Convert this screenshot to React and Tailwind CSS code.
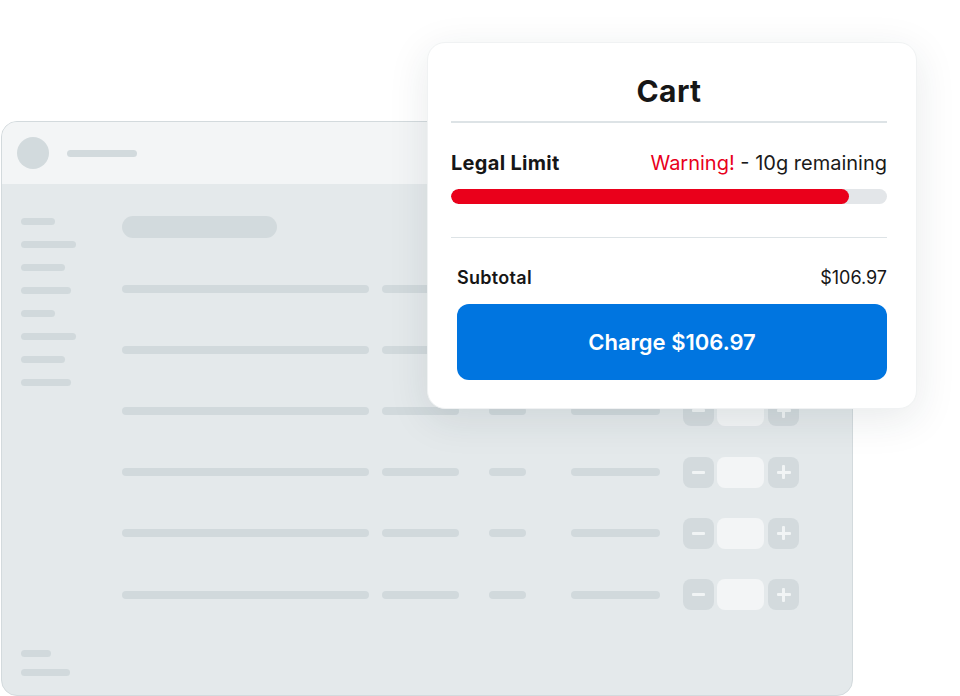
const rows = [0, 1, 2, 3, 4, 5];
const sideBars = ['w-[34px]', 'w-[55px]', 'w-[44px]', 'w-[50px]', 'w-[34px]', 'w-[55px]', 'w-[44px]', 'w-[50px]'];

function Stepper() {
  return (
    <div className="flex items-center gap-[3px]">
      <div className="w-[31px] h-[31px] rounded-[8px] bg-[#d3dadd] flex items-center justify-center">
        <div className="w-[13px] h-[3px] bg-[#f1f4f5] rounded-[1px]" />
      </div>
      <div className="w-[47px] h-[31px] rounded-[8px] bg-[#f3f5f6]" />
      <div className="ml-[1px] w-[31px] h-[31px] rounded-[8px] bg-[#d3dadd] flex items-center justify-center relative">
        <div className="w-[14px] h-[3px] bg-[#f1f4f5] rounded-[1px]" />
        <div className="absolute w-[3px] h-[14px] bg-[#f1f4f5] rounded-[1px]" />
      </div>
    </div>
  );
}

function Row() {
  return (
    <div className="h-[61.2px] flex items-center">
      <div className="w-[247px] h-[8px] rounded-full bg-[#d1d9dc]" />
      <div className="ml-[13px] w-[77px] h-[8px] rounded-full bg-[#d1d9dc]" />
      <div className="ml-[30px] w-[37px] h-[8px] rounded-full bg-[#d1d9dc]" />
      <div className="ml-[45px] w-[89px] h-[8px] rounded-full bg-[#d1d9dc]" />
      <div className="ml-[23px]">
        <Stepper />
      </div>
    </div>
  );
}

function Backdrop() {
  return (
    <div className="ml-[1px] mt-[121px] w-[852px] h-[575px] rounded-[16px] border-[1.5px] border-[#d3dadd] bg-[#e4e9eb] overflow-hidden flex flex-col">
      <div className="h-[62px] bg-[#f3f5f6] flex items-center pl-[15px] gap-[18px] shrink-0">
        <div className="w-[32px] h-[32px] rounded-full bg-[#d2dadd]" />
        <div className="w-[70px] h-[7px] rounded-full bg-[#d2dadd]" />
      </div>
      <div className="flex flex-1">
        <div className="w-[120px] pl-[19px] pt-[34px] pb-[19px] flex flex-col">
          <div className="flex flex-col gap-[16px]">
            {sideBars.map((w, i) => (
              <div key={i} className={`${w} h-[7px] rounded-full bg-[#d1d9dc]`} />
            ))}
          </div>
          <div className="mt-auto flex flex-col gap-[12px]">
            <div className="w-[30px] h-[7px] rounded-full bg-[#d1d9dc]" />
            <div className="w-[49px] h-[7px] rounded-full bg-[#d1d9dc]" />
          </div>
        </div>
        <div className="pt-[32px]">
          <div className="w-[155px] h-[22px] rounded-full bg-[#d2dadd]" />
          <div className="mt-[20px]">
            {rows.map((r) => (
              <Row key={r} />
            ))}
          </div>
        </div>
      </div>
    </div>
  );
}

function Cart() {
  return (
    <div className="absolute left-[427px] top-[42px] w-[490px] h-[367px] rounded-[18px] bg-white border border-[#f0f2f3] shadow-[0_10px_40px_rgba(30,45,55,0.10)] pl-[23px] pr-[29px] pt-[30px]">
      <h1 className="text-center text-[30px] leading-[36px] font-bold tracking-[0.4px] text-[#161616]">Cart</h1>
      <div className="mt-[12px] h-[1.5px] bg-[#dde3e6]" />
      <div className="mt-[28px] flex items-center justify-between text-[20px] leading-[24px]">
        <span className="font-bold tracking-[0.3px] text-[#161616]">Legal Limit</span>
        <span className="text-[#1a1a1a]">
          <span className="text-[#e8001c]">Warning!</span> - 10g remaining
        </span>
      </div>
      <div className="mt-[14px] h-[15px] rounded-full bg-[#e3e6e9] overflow-hidden">
        <div className="h-full rounded-full bg-[#ea001b]" style={{ width: `${(398 / 436) * 100}%` }} />
      </div>
      <div className="mt-[33px] h-[1.5px] bg-[#dde3e6]" />
      <div className="ml-[6px]">
        <div className="mt-[29px] flex items-center justify-between text-[18px] leading-[22px] text-[#161616]">
          <span className="font-semibold tracking-[0.3px]">Subtotal</span>
          <span>$106.97</span>
        </div>
        <button className="mt-[15px] w-full h-[76px] rounded-[12px] bg-[#0075e0] text-white text-[22px] font-semibold">
          Charge $106.97
        </button>
      </div>
    </div>
  );
}

export default function App() {
  return (
    <div className="relative w-[960px] h-[696px] bg-white overflow-hidden font-['Inter',sans-serif]">
      <Backdrop />
      <Cart />
    </div>
  );
}
